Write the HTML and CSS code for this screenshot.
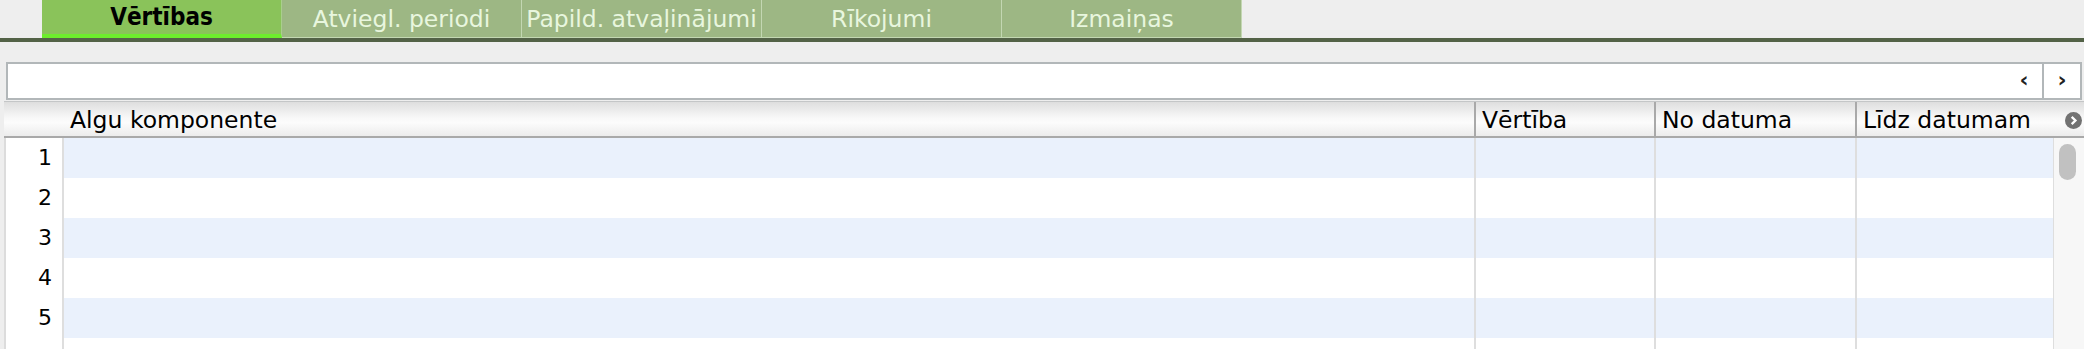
FILE: index.html
```html
<html>
  <head>
    <title>Vērtības</title>
    <link rel="stylesheet" href="styles.css">
  </head>
  <body>
    <div class='tabs'>
      <div class='tab active'>Vērtības</div>
      <div class='tab'>Atviegl. periodi</div>
      <div class='tab'>Papild. atvaļinājumi</div>
      <div class='tab'>Rīkojumi</div>
      <div class='tab'>Izmaiņas</div>
    </div>

    <div class='toolbar'>
      <div class='field'>
        <div class='field-text'></div>
        <div class='nav'>&lsaquo;</div>
        <div class='nav last'>&rsaquo;</div>
      </div>
    </div>

    <div class='grid'>
      <div class='head'>
        <div class='hcell rn'></div>
        <div class='hcell'>Algu komponente</div>
        <div class='hcell'>Vērtība</div>
        <div class='hcell'>No datuma</div>
        <div class='hcell last'>Līdz datumam</div>
        <div class='hcell corner'>
          <svg width='17' height='17' viewBox='0 0 16 16'>
            <circle cx='8' cy='8' r='8' fill='#727272'/>
            <path d='M6.3 4.6 L9.8 8 L6.3 11.4' fill='none' stroke='#fff' stroke-width='2.2'/>
          </svg>
        </div>
      </div>

      <div class='main'>
        <div class='rows'>
          <div class='row odd'><div class='cell rn'>1</div><div class='cell'></div><div class='cell'></div><div class='cell'></div><div class='cell'></div></div>
          <div class='row'><div class='cell rn'>2</div><div class='cell'></div><div class='cell'></div><div class='cell'></div><div class='cell'></div></div>
          <div class='row odd'><div class='cell rn'>3</div><div class='cell'></div><div class='cell'></div><div class='cell'></div><div class='cell'></div></div>
          <div class='row'><div class='cell rn'>4</div><div class='cell'></div><div class='cell'></div><div class='cell'></div><div class='cell'></div></div>
          <div class='row odd'><div class='cell rn'>5</div><div class='cell'></div><div class='cell'></div><div class='cell'></div><div class='cell'></div></div>
          <div class='row'><div class='cell rn'>6</div><div class='cell'></div><div class='cell'></div><div class='cell'></div><div class='cell'></div></div>
        </div>
        <div class='vscroll'>
          <div class='thumb'></div>
        </div>
      </div>
    </div>
  </body>
</html>
```

FILE: styles.css
```css
html, body {
  margin: 0;
  height: 349px;
  overflow: hidden;
  background-color: #eeeeee;
  font-family: 'DejaVu Sans', Verdana, sans-serif;
  color: #111;
}

/* tab strip */
.tabs {
  display: flex;
  height: 38px;
  padding-left: 42px;
  border-bottom: 4px solid #536247;
}

.tab {
  width: 239px;
  background-color: #9db784;
  border-right: 1px solid #c3d7b2;
  border-bottom: 1px solid #c3d7b2;
  color: #e8f6de;
  font-size: 23.5px;
  text-align: center;
  line-height: 38px;
  white-space: nowrap;
  overflow: hidden;
}

.tab.active {
  background-color: #8ac35a;
  border-bottom: 4px solid #6ded2c;
  border-right: 1px solid #a9cf8c;
  color: #000;
  font-family: 'DejaVu Sans Condensed', 'DejaVu Sans', sans-serif;
  font-size: 24px;
  font-weight: bold;
  line-height: 35px;
}

/* search field with arrows */
.toolbar {
  padding: 20px 2px 1px 6px;
}

.field {
  display: flex;
  height: 38px;
  box-sizing: border-box;
  border: 2px solid #b2b7b9;
  background-color: white;
}

.field-text {
  flex: 1;
}

.nav {
  width: 36px;
  text-align: center;
  font-size: 22px;
  font-weight: bold;
  line-height: 32px;
  color: #222;
}

.nav.last {
  border-left: 2px solid #b2b7b9;
}

/* table */
.grid {
  margin-left: 4px;
  font-size: 23.5px;
}

.head {
  display: grid;
  grid-template-columns: 60px 1412px 180px 201px 1fr 22px;
  height: 37px;
  box-sizing: border-box;
  border-top: 1px solid #c4c6c7;
  border-bottom: 2px solid #a9a9a9;
  background: linear-gradient(#dedede, #f7f7f7 45%, #fcfcfc 60%, #ececec);
}

.hcell {
  padding-left: 6px;
  line-height: 36px;
  border-right: 2px solid #a9a9a9;
  white-space: nowrap;
  color: #000;
}

.hcell.rn,
.hcell.last {
  border-right: none;
}

.hcell.corner {
  border-right: none;
  padding: 0;
  display: flex;
  align-items: center;
  justify-content: flex-end;
  padding-right: 2px;
}

.main {
  display: flex;
  border-left: 2px solid #dcdcdc;
}

.rows {
  width: 2047px;
}

.row {
  display: grid;
  grid-template-columns: 58px 1412px 180px 201px 196px;
  height: 40px;
  background-color: white;
}

.row.odd .cell {
  background-color: #eaf1fc;
}

.cell {
  border-right: 2px solid #dedede;
}

.cell:last-child {
  border-right: none;
}

.row .cell.rn {
  background-color: white;
  text-align: right;
  padding-right: 10px;
  line-height: 40px;
  font-size: 22px;
  color: #000;
}

.vscroll {
  flex: 1;
  background-color: #f7f7f7;
  border-left: 1px solid #dedede;
  padding: 6px 0 0 5px;
}

.thumb {
  width: 17px;
  height: 36px;
  border-radius: 9px;
  background-color: #c1c1c1;
}
```
